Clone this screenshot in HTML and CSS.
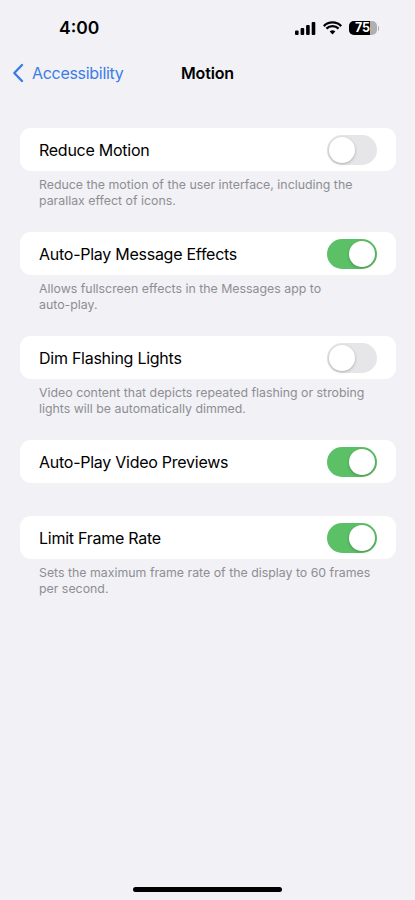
FILE: index.html
```html
<!DOCTYPE html>
<html lang="en">
<head>
<meta charset="utf-8">
<title>Motion</title>
<link rel="stylesheet" href="styles.css">
</head>
<body>
<div class="status">
  <span class="time">4:00</span>
  <div class="status-icons">
    <svg class="signal" width="21" height="13" viewBox="0 0 21 13"><rect x="0" y="8.5" width="3.6" height="4.5" rx="1"/><rect x="5.6" y="6" width="3.6" height="7" rx="1"/><rect x="11.1" y="3" width="3.6" height="10" rx="1"/><rect x="16.7" y="0" width="3.6" height="13" rx="1"/></svg>
    <svg class="wifi" width="19" height="14" viewBox="0 0 19 14"><path d="M9.5 13.6 6.7 10.6a4 4 0 0 1 5.6 0Z"/><path d="M1.6 5.9 0 4.2a13.4 13.4 0 0 1 19 0l-1.6 1.7a11.1 11.1 0 0 0-15.800 0Z"/><path d="M4.2 8.500 2.600 6.800a9.700 9.700 0 0 1 13.800 0l-1.600 1.700a7.400 7.400 0 0 0-10.600 0Z"/></svg>
    <div class="battery"><div class="battery-body"><span class="battery-fill"></span><span class="battery-text">75</span></div><span class="battery-cap"></span></div>
  </div>
</div>
<nav class="nav">
  <div class="back">
    <svg width="12" height="20" viewBox="0 0 12 20"><path d="M10 2 2.300 10 10 18" fill="none" stroke="#3b7de6" stroke-width="2.400" stroke-linecap="round" stroke-linejoin="round"/></svg>
    <span>Accessibility</span>
  </div>
  <div class="title">Motion</div>
</nav>
<main class="content">
  <section class="group">
    <div class="card"><span class="label">Reduce Motion</span><span class="switch"><span class="knob"></span></span></div>
    <p class="note">Reduce the motion of the user interface, including the parallax effect of icons.</p>
  </section>
  <section class="group">
    <div class="card"><span class="label">Auto-Play Message Effects</span><span class="switch on"><span class="knob"></span></span></div>
    <p class="note">Allows fullscreen effects in the Messages app to <span class="nowrap">auto-play.</span></p>
  </section>
  <section class="group">
    <div class="card"><span class="label">Dim Flashing Lights</span><span class="switch"><span class="knob"></span></span></div>
    <p class="note">Video content that depicts repeated flashing or strobing lights will be automatically dimmed.</p>
  </section>
  <section class="group solo">
    <div class="card"><span class="label">Auto-Play Video Previews</span><span class="switch on"><span class="knob"></span></span></div>
  </section>
  <section class="group">
    <div class="card"><span class="label">Limit Frame Rate</span><span class="switch on"><span class="knob"></span></span></div>
    <p class="note">Sets the maximum frame rate of the display to 60 frames per second.</p>
  </section>
</main>
<div class="home"></div>
</body>
</html>
```
FILE: styles.css
```css
* { box-sizing: border-box; }
html, body { margin: 0; height: 900px; overflow: hidden; }
body {
  position: relative;
  background: #f1f1f6;
  font-family: Inter, "Liberation Sans", sans-serif;
  color: #000;
}
.status {
  height: 55px;
  padding: 17px 0 0 59px;
  display: flex;
  justify-content: space-between;
  align-items: flex-start;
}
.time { font-size: 17.500px; font-weight: 600; line-height: 22px; }
.status-icons { display: flex; align-items: center; gap: 7px; padding: 4px 36px 0 0; }
.signal, .wifi { fill: #000; display: block; }
.battery { display: flex; align-items: center; gap: 1px; }
.battery-body {
  position: relative;
  width: 28px;
  height: 14px;
  border-radius: 5px;
  background: #b0b0b2;
  overflow: hidden;
}
.battery-fill { position: absolute; left: 0; top: 0; bottom: 0; width: 21px; background: #000; }
.battery-text {
  position: relative;
  display: block;
  text-align: center;
  font-size: 12.500px;
  font-weight: 700;
  line-height: 14px;
  color: #fff;
}
.battery-cap { width: 1.500px; height: 5px; background: #b0b0b2; border-radius: 0 2px 2px 0; }
.nav { position: relative; height: 36px; display: flex; align-items: center; padding-left: 12px; }
.back { display: flex; align-items: center; gap: 8px; color: #3b7de6; font-size: 16px; letter-spacing: -0.300px; }
.title {
  position: absolute;
  left: 181px;
  top: 0;
  line-height: 36px;
  font-size: 16px;
  font-weight: 600;
  letter-spacing: -0.150px;
}
.content { padding: 37px 19px 0 20px; }
.group { margin-bottom: 23px; }
.group.solo { margin-bottom: 33px; }
.card {
  height: 43px;
  background: #fff;
  border-radius: 11px;
  display: flex;
  align-items: center;
  justify-content: space-between;
  padding: 0 19px;
}
.label { font-size: 16px; letter-spacing: -0.260px; }
.note {
  margin: 6px 0 0;
  padding: 0 19px;
  height: 32px;
  font-size: 12.350px;
  line-height: 16px;
  color: #8e8e92;
}
.nowrap { white-space: nowrap; }
.switch {
  display: flex;
  align-items: center;
  width: 50px;
  height: 30px;
  padding: 2px;
  border-radius: 15px;
  background: #e6e6e8;
}
.switch.on { background: #5cc166; justify-content: flex-end; }
.knob {
  width: 26px;
  height: 26px;
  border-radius: 50%;
  background: #fff;
  box-shadow: 0 1px 3px rgba(0, 0, 0, 0.25);
}
.home {
  position: absolute;
  left: 133px;
  bottom: 8px;
  width: 149px;
  height: 5px;
  border-radius: 3px;
  background: #000;
}
```
